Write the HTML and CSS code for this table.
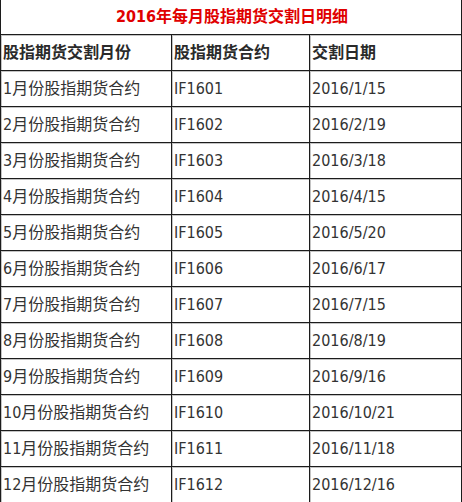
FILE: index.html
```html
<!DOCTYPE html>
<html lang="zh">
<head>
<meta charset="utf-8">
<link rel="stylesheet" href="styles.css">
</head>
<body>
<table class="tbl">
  <colgroup>
    <col class="c1"><col class="c2"><col class="c3">
  </colgroup>
  <tr class="title-row"><td colspan="3" class="title">2016年每月股指期货交割日明细</td></tr>
  <tr class="head"><td>股指期货交割月份</td><td>股指期货合约</td><td>交割日期</td></tr>
  <tr><td>1月份股指期货合约</td><td>IF1601</td><td>2016/1/15</td></tr>
  <tr><td>2月份股指期货合约</td><td>IF1602</td><td>2016/2/19</td></tr>
  <tr><td>3月份股指期货合约</td><td>IF1603</td><td>2016/3/18</td></tr>
  <tr><td>4月份股指期货合约</td><td>IF1604</td><td>2016/4/15</td></tr>
  <tr><td>5月份股指期货合约</td><td>IF1605</td><td>2016/5/20</td></tr>
  <tr><td>6月份股指期货合约</td><td>IF1606</td><td>2016/6/17</td></tr>
  <tr><td>7月份股指期货合约</td><td>IF1607</td><td>2016/7/15</td></tr>
  <tr><td>8月份股指期货合约</td><td>IF1608</td><td>2016/8/19</td></tr>
  <tr><td>9月份股指期货合约</td><td>IF1609</td><td>2016/9/16</td></tr>
  <tr><td>10月份股指期货合约</td><td>IF1610</td><td>2016/10/21</td></tr>
  <tr><td>11月份股指期货合约</td><td>IF1611</td><td>2016/11/18</td></tr>
  <tr><td>12月份股指期货合约</td><td>IF1612</td><td>2016/12/16</td></tr>
</table>
</body>
</html>
```
FILE: styles.css
```css
html, body {
  margin: 0;
  padding: 0;
  background: #fff;
}
.tbl {
  border-collapse: collapse;
  width: 461px;
  table-layout: fixed;
  font-family: "DejaVu Sans Condensed", "Noto Sans CJK SC", sans-serif;
  font-size: 16px;
  color: #333;
}
.c1 { width: 171px; }
.c2 { width: 138px; }
.c3 { width: 152px; }
.tbl tr { height: 36px; }
.tbl td {
  border: 1px solid #1c1c1c;
  box-shadow: inset 1px 1px 0 #c4c4c4;
  padding: 2px 0 0 2px;
  white-space: nowrap;
  overflow: hidden;
  line-height: 20px;
}
.tbl tr.title-row { height: 34px; }
.title-row td {
  border-top: none;
  box-shadow: none;
  padding-top: 0;
}
.title {
  text-align: center;
  color: #e00000;
  font-weight: bold;
}
.head td {
  font-weight: bold;
  color: #2a2a2a;
}
```
